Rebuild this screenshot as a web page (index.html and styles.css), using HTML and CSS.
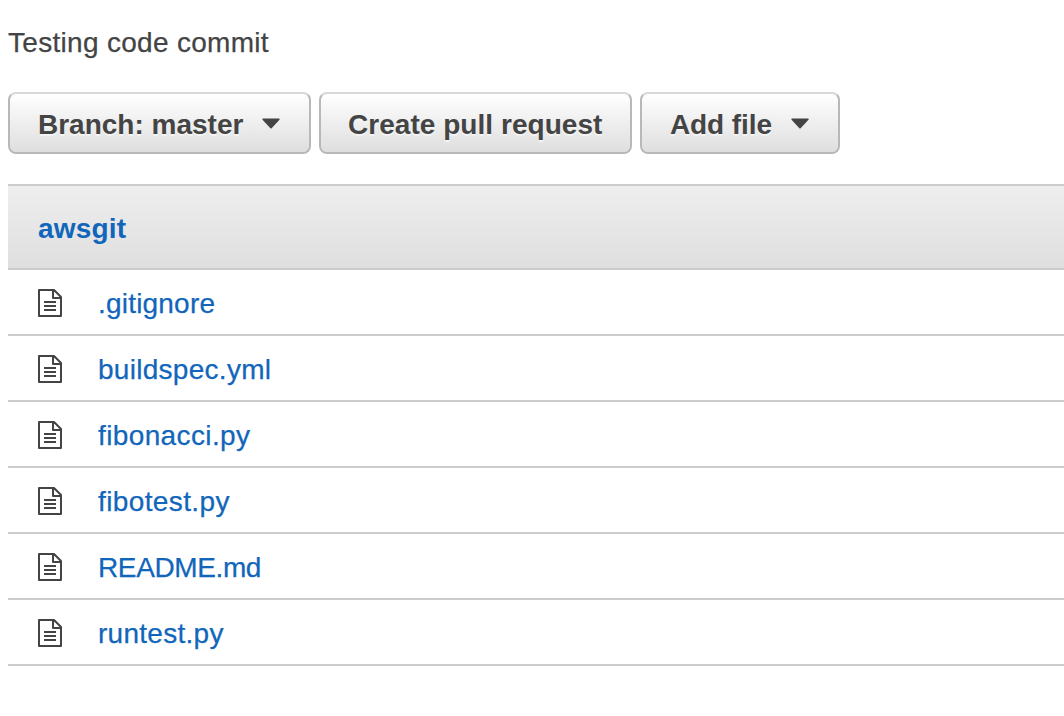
FILE: index.html
```html
<!DOCTYPE html>
<html lang="en">
<head>
<meta charset="utf-8">
<title>awsgit</title>
<link rel="stylesheet" href="styles.css">
</head>
<body>
<svg class="sprite" aria-hidden="true">
  <symbol id="file" viewBox="0 0 26 30">
    <path d="M2 2H17L24 9V28H2Z M16 2V10H24 M7 14H19 M7 18H19 M7 22H19" fill="none" stroke="#444" stroke-width="2" stroke-linejoin="round"/>
  </symbol>
  <symbol id="caret" viewBox="0 0 18 11">
    <path d="M1 .5H17Q18 .5 17.5 1.7L9.6 10.3Q9 10.9 8.4 10.3L.5 1.7Q0 .5 1 .5Z" fill="#444"/>
  </symbol>
</svg>
<main class="page">
  <p class="description">Testing code commit</p>
  <div class="toolbar">
    <button class="btn btn-branch"><span>Branch: master</span><svg class="caret"><use href="#caret"/></svg></button>
    <button class="btn btn-pull"><span>Create pull request</span></button>
    <button class="btn btn-add"><span>Add file</span><svg class="caret"><use href="#caret"/></svg></button>
  </div>
  <section class="files">
    <header class="files-head"><a class="repo">awsgit</a></header>
    <ul class="list">
      <li class="row"><svg class="icon"><use href="#file"/></svg><a class="link dotfile">.gitignore</a></li>
      <li class="row"><svg class="icon"><use href="#file"/></svg><a class="link">buildspec.yml</a></li>
      <li class="row"><svg class="icon"><use href="#file"/></svg><a class="link script">fibonacci.py</a></li>
      <li class="row"><svg class="icon"><use href="#file"/></svg><a class="link script">fibotest.py</a></li>
      <li class="row"><svg class="icon"><use href="#file"/></svg><a class="link readme">README.md</a></li>
      <li class="row"><svg class="icon"><use href="#file"/></svg><a class="link">runtest.py</a></li>
    </ul>
  </section>
</main>
</body>
</html>
```
FILE: styles.css
```css
* { box-sizing: border-box; }
body { margin: 0; background: #fff; color: #444; font: 28px/32px "Liberation Sans", Arial, sans-serif; }
.sprite { display: none; }
.page { padding: 27px 0 0 8px; }
.description { margin: 0 0 33px; letter-spacing: .3px; -webkit-text-stroke: .25px currentColor; }
.toolbar { display: flex; gap: 8px; height: 62px; margin-bottom: 30px; }
.btn { display: flex; align-items: center; height: 62px; padding: 3px 28px 0; border: 2px solid #b8b8b8; border-top-color: #d8d8d8; border-radius: 8px; background: linear-gradient(#fff, #dedede) padding-box; color: #444; font: bold 28px/32px "Liberation Sans", Arial, sans-serif; white-space: nowrap; text-shadow: 0 2px 1px #f4f4f4; }
.btn-branch { width: 303px; padding-right: 29px; }
.btn-pull { width: 313px; padding-left: 27px; }
.btn-pull span { letter-spacing: .04px; }
.btn-add { width: 200px; padding-right: 29px; }
.btn-add span { letter-spacing: -.1px; }
.caret { flex: none; width: 18px; height: 11px; margin: 0 0 2px auto; }
.files-head { height: 86px; padding: 27px 30px 0; border-top: 2px solid #ccc; border-bottom: 2px solid #ccc; background: linear-gradient(#eee, #dfdfdf); }
.repo { color: #16b; font-weight: bold; letter-spacing: .2px; }
.list { margin: 0; padding: 0; list-style: none; }
.row { display: flex; align-items: center; height: 66px; padding: 2px 0 0 29px; border-bottom: 2px solid #ccc; }
.icon { width: 26px; height: 30px; margin-right: 35px; }
.link { padding-top: 2px; color: #16b; letter-spacing: .28px; -webkit-text-stroke: .25px currentColor; }
.dotfile { letter-spacing: .2px; }
.script { letter-spacing: .38px; }
.readme { letter-spacing: -.38px; }
```
